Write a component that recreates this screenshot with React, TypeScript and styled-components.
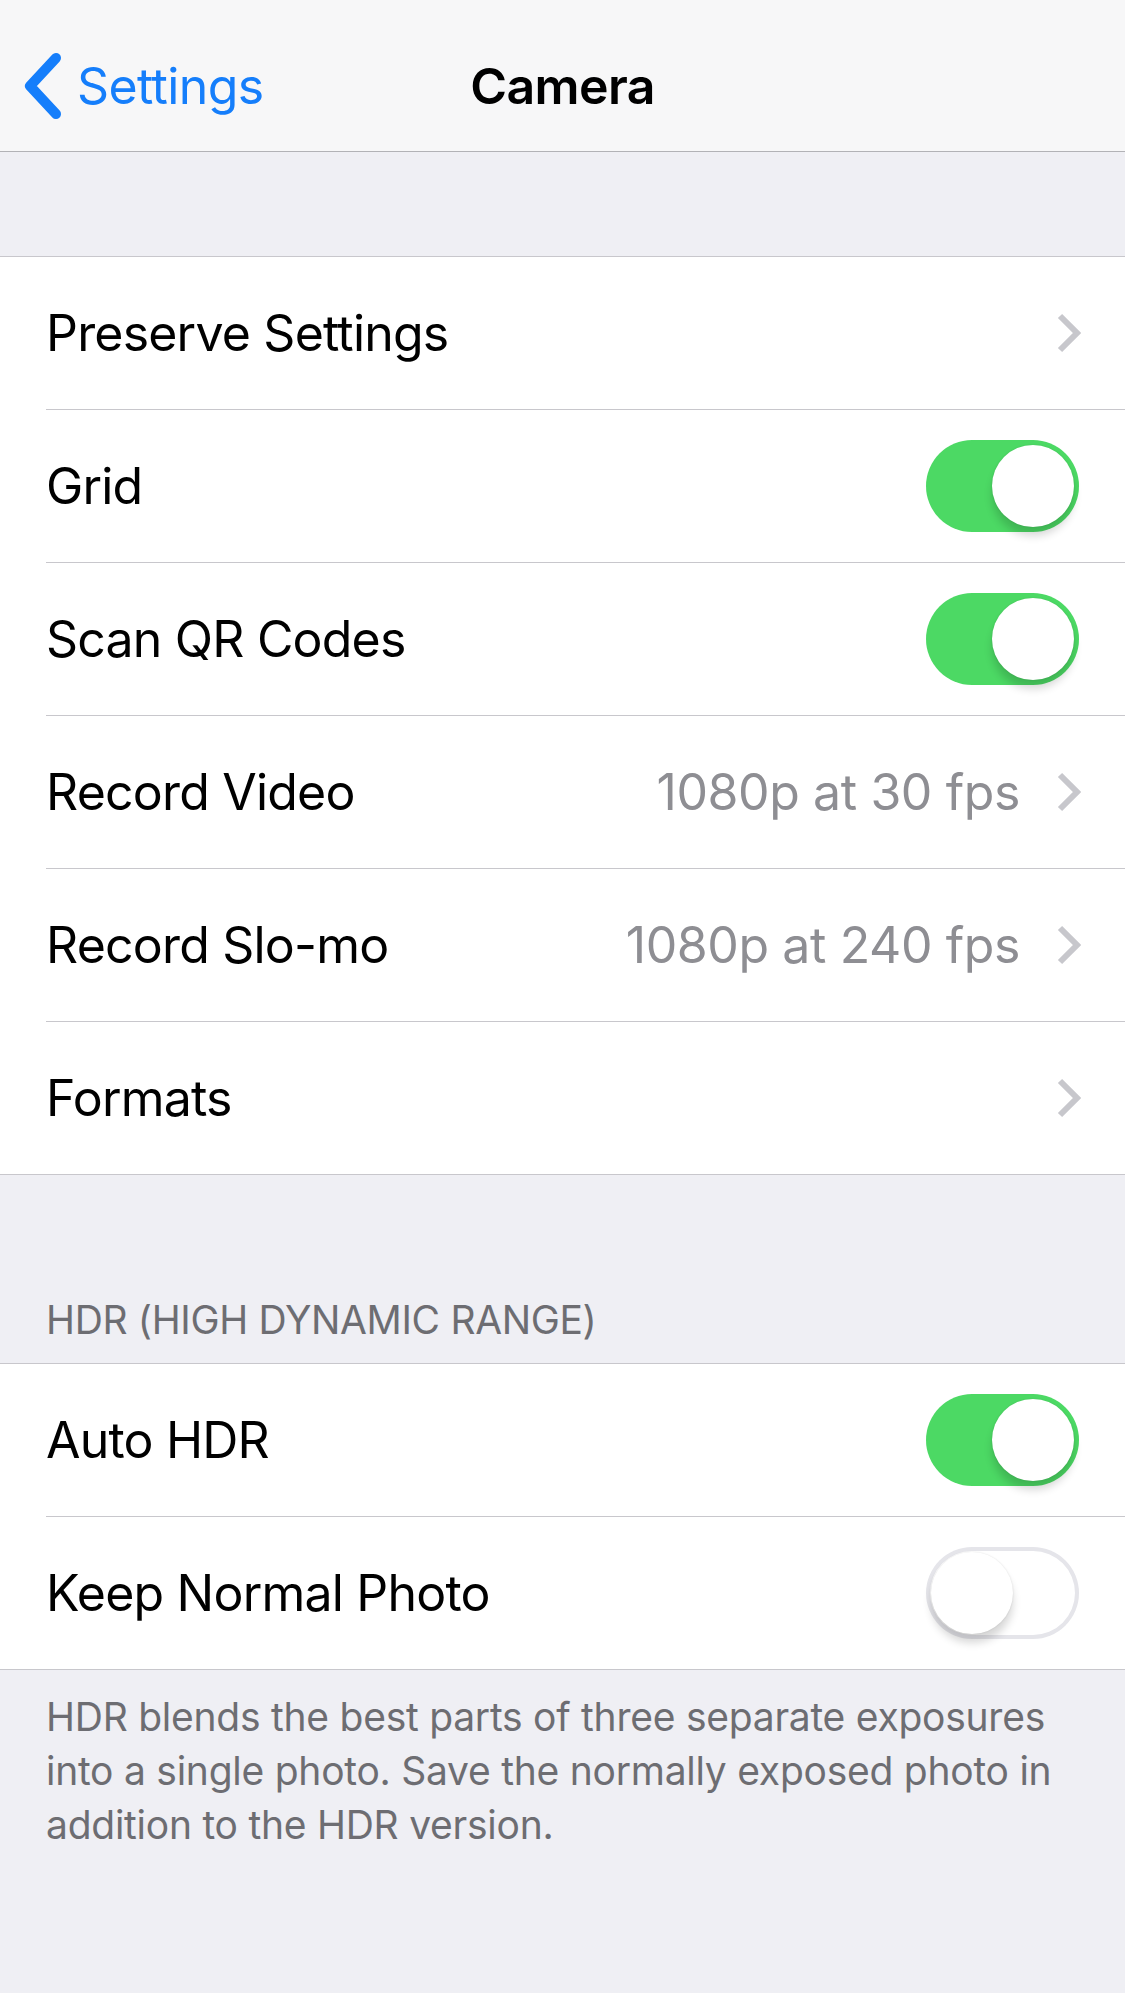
import styled, { createGlobalStyle } from 'styled-components';

type Item =
  | { label: string; kind: 'link'; value?: string }
  | { label: string; kind: 'switch'; on: boolean };

const mainItems: Item[] = [
  { label: 'Preserve Settings', kind: 'link' },
  { label: 'Grid', kind: 'switch', on: true },
  { label: 'Scan QR Codes', kind: 'switch', on: true },
  { label: 'Record Video', kind: 'link', value: '1080p at 30 fps' },
  { label: 'Record Slo-mo', kind: 'link', value: '1080p at 240 fps' },
  { label: 'Formats', kind: 'link' },
];

const hdrItems: Item[] = [
  { label: 'Auto HDR', kind: 'switch', on: true },
  { label: 'Keep Normal Photo', kind: 'switch', on: false },
];

const BackChevron = () => (
  <svg width="40" height="66" viewBox="0 0 40 66">
    <polyline
      points="33,5 7,33 33,61"
      fill="none"
      stroke="#157efb"
      strokeWidth="10"
      strokeLinecap="round"
      strokeLinejoin="round"
    />
  </svg>
);

const Chevron = () => (
  <svg width="24" height="40" viewBox="0 0 24 40">
    <polyline
      points="3,3 20,20 3,37"
      fill="none"
      stroke="#c7c7cc"
      strokeWidth="6"
      strokeLinecap="butt"
    />
  </svg>
);

const Row = ({ item }: { item: Item }) => (
  <RowOuter>
    <RowInner>
      <Label>{item.label}</Label>
      {item.kind === 'link' ? (
        <Accessory>
          {item.value && <Value>{item.value}</Value>}
          <Chevron />
        </Accessory>
      ) : (
        <Switch $on={item.on}>
          <Thumb />
        </Switch>
      )}
    </RowInner>
  </RowOuter>
);

const App = () => {
  return (
    <>
      <GlobalStyle />
      <Page>
        <NavBar>
          <Back>
            <BackChevron />
            <span>Settings</span>
          </Back>
          <Title>Camera</Title>
          <span />
        </NavBar>
        <Spacer />
        <Group>
          {mainItems.map((item) => (
            <Row key={item.label} item={item} />
          ))}
        </Group>
        <SectionHeader>HDR (HIGH DYNAMIC RANGE)</SectionHeader>
        <Group>
          {hdrItems.map((item) => (
            <Row key={item.label} item={item} />
          ))}
        </Group>
        <Footer>
          HDR blends the best parts of three separate exposures into a single photo. Save the
          normally exposed photo in addition to the HDR version.
        </Footer>
      </Page>
    </>
  );
};

const GlobalStyle = createGlobalStyle`
  html, body {
    margin: 0;
    padding: 0;
    background: #efeff4;
  }
  body {
    font-family: Inter, "Noto Sans", "Liberation Sans", sans-serif;
    -webkit-font-smoothing: antialiased;
  }
`;

const Page = styled.div`
  width: 1125px;
  min-height: 1993px;
  background: #efeff4;
  display: flex;
  flex-direction: column;
`;

const NavBar = styled.header`
  height: 152px;
  box-sizing: border-box;
  padding-top: 20px;
  background: #f7f7f8;
  border-bottom: 1px solid #b2b2b6;
  display: grid;
  grid-template-columns: 1fr auto 1fr;
  align-items: center;
`;

const Back = styled.div`
  display: flex;
  align-items: center;
  gap: 14px;
  padding-left: 23px;
  color: #157efb;
  font-size: 50px;
  letter-spacing: -0.6px;
`;

const Title = styled.h1`
  margin: 0;
  font-size: 50px;
  font-weight: 600;
  letter-spacing: -0.6px;
  color: #000;
`;

const Spacer = styled.div`
  height: 104px;
`;

const Group = styled.section`
  background: #fff;
  border-top: 1px solid #c8c7cc;
  border-bottom: 1px solid #c8c7cc;
`;

const RowOuter = styled.div`
  padding-left: 46px;
  &:last-child > div {
    border-bottom: none;
  }
`;

const RowInner = styled.div`
  height: 152px;
  padding-right: 46px;
  border-bottom: 1px solid #c8c7cc;
  display: flex;
  align-items: center;
  justify-content: space-between;
`;

const Label = styled.span`
  font-size: 50px;
  letter-spacing: -0.8px;
  color: #000;
`;

const Accessory = styled.div`
  display: flex;
  align-items: center;
  gap: 37px;
  margin-right: -2px;
`;

const Value = styled.span`
  font-size: 50px;
  letter-spacing: -0.4px;
  color: #8e8e93;
`;

const Switch = styled.div<{ $on: boolean }>`
  width: 153px;
  height: 92px;
  box-sizing: border-box;
  border-radius: 46px;
  padding: 0 5px;
  display: flex;
  align-items: center;
  justify-content: ${(p) => (p.$on ? 'flex-end' : 'flex-start')};
  background: ${(p) => (p.$on ? '#4cd964' : '#fff')};
  box-shadow: ${(p) => (p.$on ? 'none' : 'inset 0 0 0 4px #e5e5ea')};
`;

const Thumb = styled.div`
  width: 82px;
  height: 82px;
  border-radius: 50%;
  background: #fff;
  box-shadow: 0 9px 9px rgba(0, 0, 0, 0.16), 0 0 2px rgba(0, 0, 0, 0.12);
`;

const SectionHeader = styled.div`
  height: 188px;
  box-sizing: border-box;
  padding: 0 46px 20px;
  display: flex;
  align-items: flex-end;
  font-size: 39px;
  letter-spacing: -0.35px;
  color: #6d6d72;
`;

const Footer = styled.p`
  margin: 0;
  padding: 20px 46px 0;
  font-size: 39px;
  line-height: 54px;
  letter-spacing: -0.25px;
  color: #6d6d72;
`;

export default App;
